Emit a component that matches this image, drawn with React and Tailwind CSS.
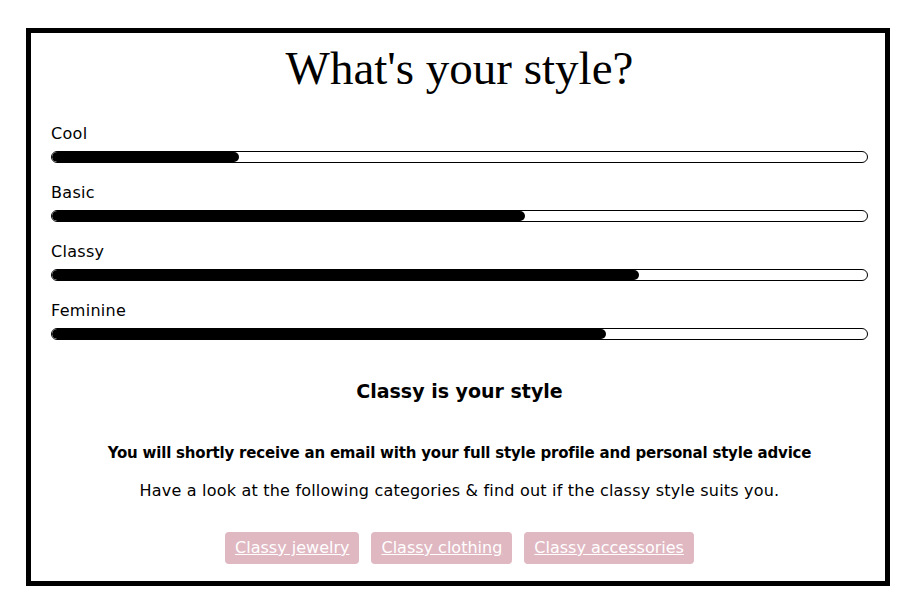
import React from 'react';

const styles = [
  { name: 'Cool', value: 23 },
  { name: 'Basic', value: 58 },
  { name: 'Classy', value: 72 },
  { name: 'Feminine', value: 68 },
];

const links = ['Classy jewelry', 'Classy clothing', 'Classy accessories'];

const StyleBar = ({ name, value }) => (
  <div className="flex flex-col">
    <span className="text-[16px] leading-5 tracking-[0.3px] text-black">{name}</span>
    <div className="mt-[7px] h-3 w-full rounded-full border border-black bg-white overflow-hidden">
      <div className="h-full rounded-full bg-black" style={{ width: `${value}%` }} />
    </div>
  </div>
);

const App = () => {
  return (
    <div className="min-h-[613px] w-[917px] bg-white pt-[28px] pl-[26px]" style={{ fontFamily: '"DejaVu Sans", "Liberation Sans", sans-serif' }}>
      <div className="w-[864px] h-[558px] border-[5px] border-black flex flex-col pl-[20px] pr-[17px] pt-[12px]">
        <h1 className="text-center text-[47px] leading-none text-black" style={{ fontFamily: '"Liberation Serif", serif' }}>
          What's your style?
        </h1>

        {/* Bars */}
        <div className="mt-[32px] flex flex-col gap-[20px]">
          {styles.map((s) => (
            <StyleBar key={s.name} name={s.name} value={s.value} />
          ))}
        </div>

        <h2 className="mt-[37px] text-center text-[19px] font-bold leading-7 text-black">Classy is your style</h2>

        <p className="mt-[37px] text-center text-[15px] font-bold leading-[22px] tracking-[-0.2px] text-black">
          You will shortly receive an email with your full style profile and personal style advice
        </p>
        <p className="mt-[16px] text-center text-[16px] leading-[22px] tracking-[0.2px] text-black">
          Have a look at the following categories &amp; find out if the classy style suits you.
        </p>

        <div className="mt-[30px] flex justify-center gap-3">
          {links.map((l) => (
            <a key={l} href="#" className="h-8 flex items-center rounded bg-[#e0b8c2] px-[10px] text-[16px] text-white underline">
              {l}
            </a>
          ))}
        </div>
      </div>
    </div>
  );
};

export default App;
